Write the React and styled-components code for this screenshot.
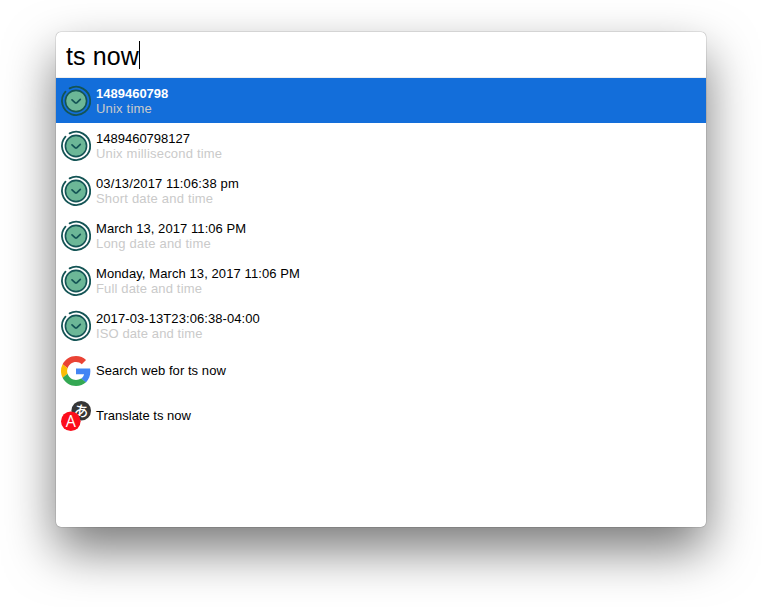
import React from "react";
import styled, { createGlobalStyle } from "styled-components";

const GlobalStyle = createGlobalStyle`
  html, body { margin: 0; padding: 0; background: #fff; }
  body { font-family: "Liberation Sans", Arial, sans-serif; overflow: hidden; }
`;

const Desktop = styled.div`
  box-sizing: border-box;
  width: 762px;
  height: 607px;
  padding: 32px 56px 80px;
  overflow: hidden;
`;

const Launcher = styled.main`
  width: 650px;
  height: 495px;
  border-radius: 5px;
  background: #fff;
  box-shadow: 0 0 0 0.5px rgba(0, 0, 0, 0.1), 0 0 1px rgba(0, 0, 0, 0.35),
    0 23px 50px rgba(0, 0, 0, 0.53);
`;

const SearchBar = styled.header`
  box-sizing: border-box;
  display: flex;
  align-items: center;
  height: 46px;
  padding-left: 10px;
  border-bottom: 1px solid #f0eeec;
`;

const Query = styled.span`
  padding-top: 3px;
  color: #000;
  font-size: 25px;
  line-height: 29px;
  letter-spacing: 0.1px;
`;

const Caret = styled.span`
  width: 1px;
  height: 28px;
  margin-top: 1px;
  background: #000;
`;

const Results = styled.ul`
  list-style: none;
  margin: 0;
  padding: 0;
`;

const Row = styled.li`
  display: flex;
  align-items: center;
  gap: 5px;
  height: 45px;
  padding-left: 5px;
  background: ${(p) => (p.$selected ? "#136eda" : "transparent")};
`;

const Icon = styled.svg`
  display: block;
  flex: none;
  width: 30px;
  height: 30px;
  overflow: visible;
`;

const Labels = styled.div`
  display: flex;
  flex-direction: column;
  font-size: 13px;
  line-height: 15px;
  white-space: nowrap;
`;

const Title = styled.span`
  color: ${(p) => (p.$selected ? "#fff" : "#000")};
  font-weight: ${(p) => (p.$selected ? 700 : 400)};
  letter-spacing: ${(p) => p.$tracking || 0}px;
`;

const Subtitle = styled.span`
  color: #cacaca;
  letter-spacing: ${(p) => p.$tracking ?? 0.2}px;
`;

const ClockIcon = () => (
  <Icon viewBox="0 0 30 30" fill="none" strokeLinecap="round" strokeLinejoin="round">
    <path d="M8.6 2.4A14.1 14.1 0 1 1 4.5 5.6" stroke="#145455" strokeWidth="1.8" />
    <circle cx="15" cy="15" r="10.6" fill="#6cb797" stroke="#145455" strokeWidth="1.6" />
    <path d="M11 13.9L14.3 16.9Q15 17.4 15.7 16.9L19.3 13.4" stroke="#145455" strokeWidth="1.7" />
  </Icon>
);

const GoogleIcon = () => (
  <Icon viewBox="0 0 48 48">
    <path fill="#EA4335" d="M24 9.5c3.54 0 6.71 1.22 9.21 3.6l6.85-6.85C35.9 2.38 30.47 0 24 0 14.62 0 6.51 5.38 2.56 13.22l7.98 6.19C12.43 13.72 17.74 9.5 24 9.5z" />
    <path fill="#4285F4" d="M46.98 24.55c0-1.57-.15-3.09-.38-4.55H24v9.02h12.94c-.58 2.96-2.26 5.48-4.78 7.18l7.73 6c4.51-4.18 7.09-10.36 7.09-17.65z" />
    <path fill="#FBBC05" d="M10.53 28.59A14.5 14.5 0 0 1 9.77 24c0-1.6.27-3.14.76-4.59l-7.98-6.19A23.9 23.9 0 0 0 0 24c0 3.88.92 7.54 2.56 10.78l7.97-6.19z" />
    <path fill="#34A853" d="M24 48c6.48 0 11.93-2.13 15.89-5.81l-7.73-6c-2.15 1.45-4.92 2.3-8.16 2.3-6.26 0-11.57-4.22-13.47-9.91l-7.98 6.19C6.51 42.62 14.62 48 24 48z" />
  </Icon>
);

const TranslateIcon = () => (
  <Icon viewBox="0 0 30 30">
    <circle cx="20.2" cy="9.8" r="9.8" fill="#363636" />
    <text x="20.4" y="15.2" textAnchor="middle" fontSize="14.5" fontWeight="500" fill="#fff" fontFamily='"Noto Sans CJK JP", sans-serif' transform="rotate(10 20.2 9.8)">あ</text>
    <circle cx="9.8" cy="20.2" r="9.8" fill="#fc0d1b" />
    <text x="9.8" y="25.8" textAnchor="middle" fontSize="16" fill="#fff" fontFamily='"Open Sans", sans-serif'>A</text>
  </Icon>
);

const results = [
  { icon: ClockIcon, title: "1489460798", subtitle: "Unix time" },
  { icon: ClockIcon, title: "1489460798127", subtitle: "Unix millisecond time" },
  { icon: ClockIcon, title: "03/13/2017 11:06:38 pm", subtitle: "Short date and time", tracking: 0.13 },
  { icon: ClockIcon, title: "March 13, 2017 11:06 PM", subtitle: "Long date and time", tracking: 0.07 },
  { icon: ClockIcon, title: "Monday, March 13, 2017 11:06 PM", subtitle: "Full date and time", tracking: 0.09, subTracking: 0.15 },
  { icon: ClockIcon, title: "2017-03-13T23:06:38-04:00", subtitle: "ISO date and time", tracking: 0.08, subTracking: 0.1 },
  { icon: GoogleIcon, title: "Search web for ts now", tracking: 0.06 },
  { icon: TranslateIcon, title: "Translate ts now" },
];

export default function App() {
  return (
    <>
      <GlobalStyle />
      <Desktop>
        <Launcher>
          <SearchBar>
            <Query>ts now</Query>
            <Caret />
          </SearchBar>
          <Results>
            {results.map(({ icon: Glyph, title, subtitle, tracking, subTracking }, i) => (
              <Row key={title} $selected={i === 0}>
                <Glyph />
                <Labels>
                  <Title $selected={i === 0} $tracking={tracking}>{title}</Title>
                  {subtitle && <Subtitle $tracking={subTracking}>{subtitle}</Subtitle>}
                </Labels>
              </Row>
            ))}
          </Results>
        </Launcher>
      </Desktop>
    </>
  );
}
